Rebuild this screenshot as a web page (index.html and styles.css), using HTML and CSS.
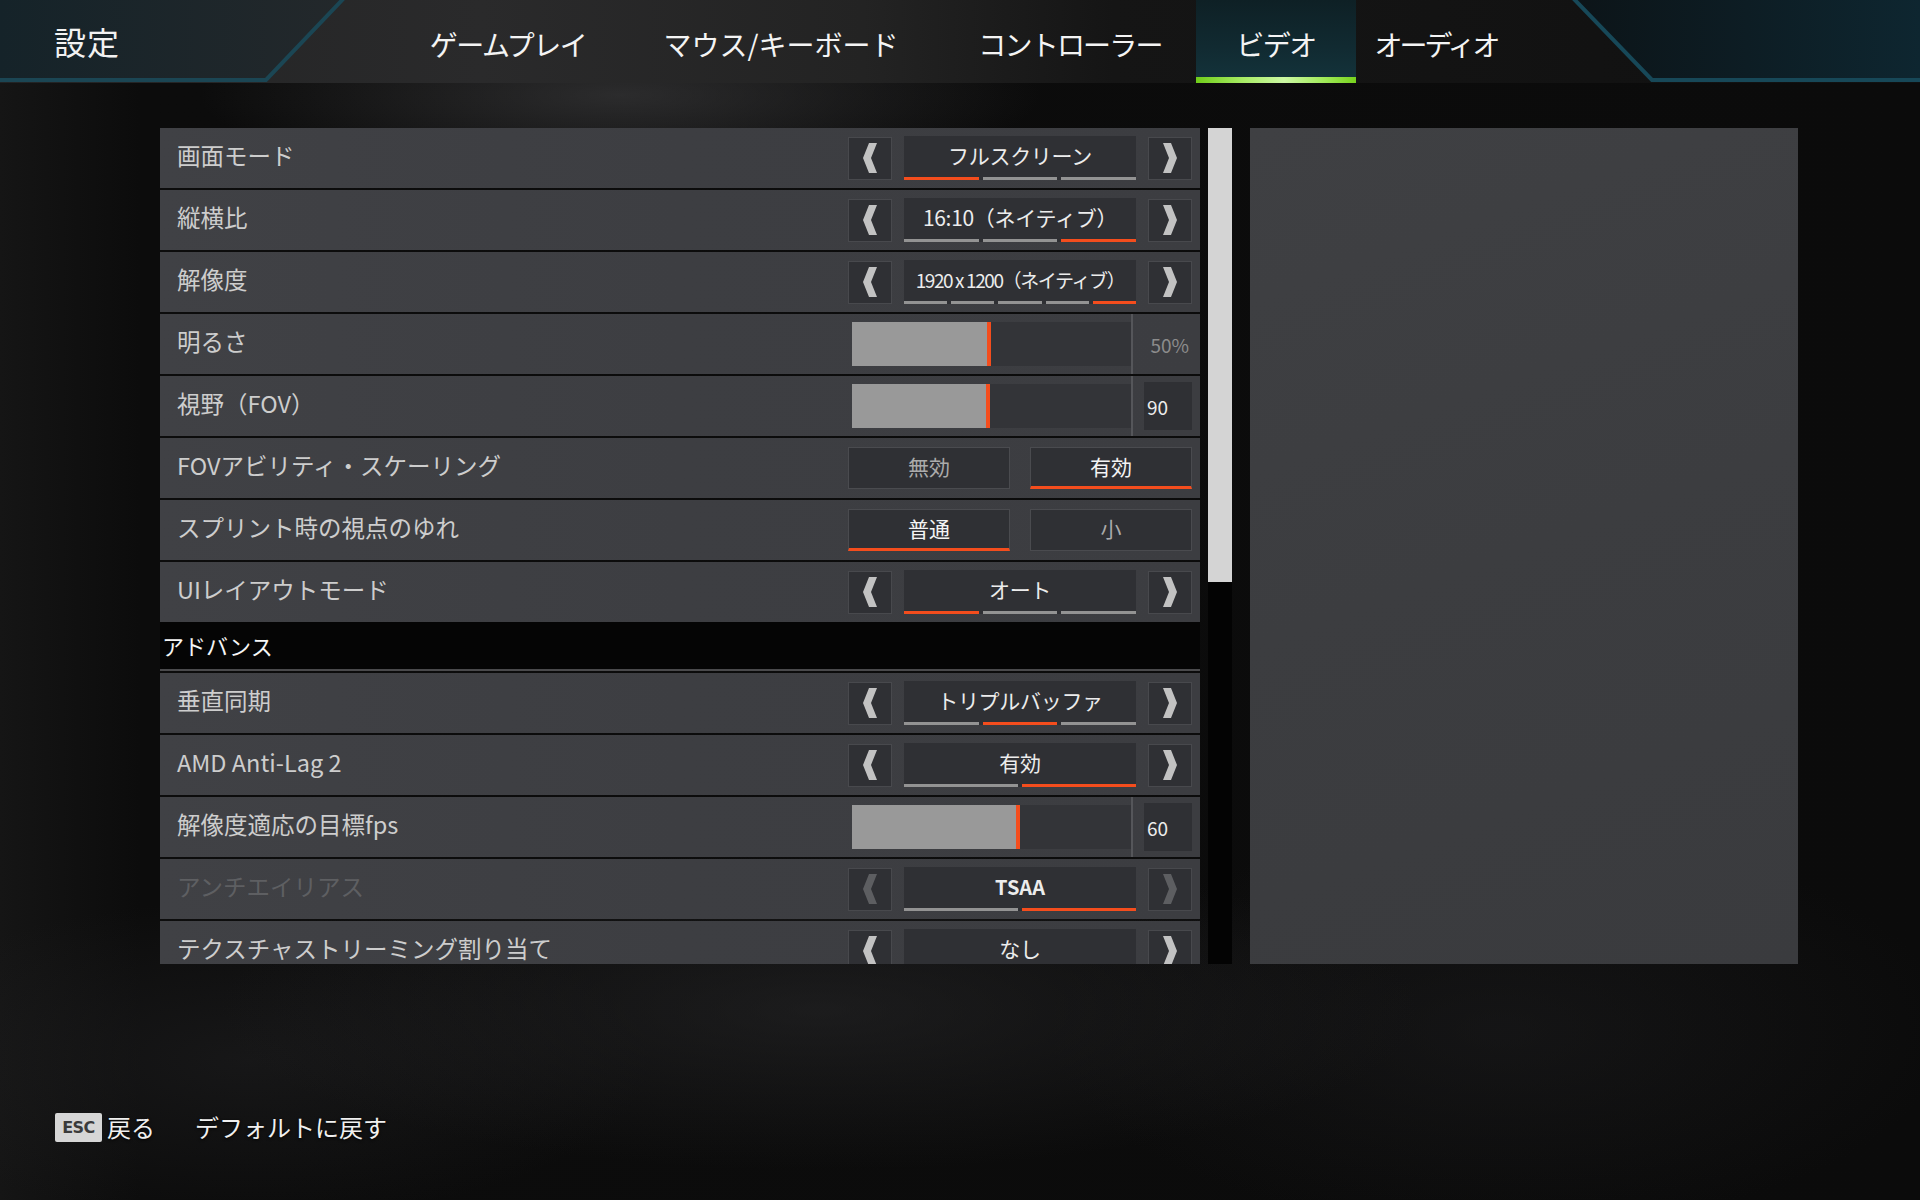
FILE: index.html
```html
<!DOCTYPE html>
<html lang="ja">
<head>
<meta charset="utf-8">
<title>設定</title>
<link rel="stylesheet" href="styles.css">
</head>
<body>
<header class="topbar">
  <svg class="topbar-deco" width="1920" height="83" viewBox="0 0 1920 83" aria-hidden="true">
    <defs>
      <linearGradient id="lp" x1="0" y1="0" x2="1" y2="0">
        <stop offset="0" stop-color="#152329"/>
        <stop offset="1" stop-color="#23282b"/>
      </linearGradient>
      <linearGradient id="rp" x1="0" y1="0" x2="1" y2="0">
        <stop offset="0" stop-color="#0c1418"/>
        <stop offset="1" stop-color="#0e2630"/>
      </linearGradient>
    </defs>
    <polygon points="0,0 343,0 266,81 0,81" fill="url(#lp)"/>
    <polyline points="345,-3 266,80 0,80" fill="none" stroke="#1b4654" stroke-width="4"/>
    <polygon points="1574,0 1653,81 1920,81 1920,0" fill="url(#rp)"/>
    <polyline points="1572,-3 1652,80 1920,80" fill="none" stroke="#174858" stroke-width="4"/>
  </svg>
  <h1 class="title">設定</h1>
  <nav class="tabs">
    <span class="tab t1">ゲームプレイ</span>
    <span class="tab t2">マウス/キーボード</span>
    <span class="tab t3">コントローラー</span>
    <span class="tab t4 active">ビデオ</span>
    <span class="tab t5">オーディオ</span>
  </nav>
</header>

<main class="content">
  <div class="list">
    <div class="row">
      <span class="label">画面モード</span>
      <div class="picker">
        <span class="arrow"><svg width="14" height="30" viewBox="0 0 14 30"><polygon points="14,0 8,15 14,30 6,30 0,15 6,0"/></svg></span>
        <div class="value"><span class="vtext">フルスクリーン</span><div class="segs"><i class="on"></i><i></i><i></i></div></div>
        <span class="arrow"><svg width="14" height="30" viewBox="0 0 14 30"><polygon points="0,0 8,0 14,15 8,30 0,30 6,15"/></svg></span>
      </div>
    </div>
    <div class="row">
      <span class="label">縦横比</span>
      <div class="picker">
        <span class="arrow"><svg width="14" height="30" viewBox="0 0 14 30"><polygon points="14,0 8,15 14,30 6,30 0,15 6,0"/></svg></span>
        <div class="value"><span class="vtext">16:10（ネイティブ）</span><div class="segs"><i></i><i></i><i class="on"></i></div></div>
        <span class="arrow"><svg width="14" height="30" viewBox="0 0 14 30"><polygon points="0,0 8,0 14,15 8,30 0,30 6,15"/></svg></span>
      </div>
    </div>
    <div class="row">
      <span class="label">解像度</span>
      <div class="picker">
        <span class="arrow"><svg width="14" height="30" viewBox="0 0 14 30"><polygon points="14,0 8,15 14,30 6,30 0,15 6,0"/></svg></span>
        <div class="value"><span class="vtext tight">1920 x 1200（ネイティブ）</span><div class="segs"><i></i><i></i><i></i><i></i><i class="on"></i></div></div>
        <span class="arrow"><svg width="14" height="30" viewBox="0 0 14 30"><polygon points="0,0 8,0 14,15 8,30 0,30 6,15"/></svg></span>
      </div>
    </div>
    <div class="row">
      <span class="label">明るさ</span>
      <div class="slider">
        <div class="track"><div class="fill" style="width:139px"></div></div>
        <span class="divider"></span>
        <span class="sval plain">50%</span>
      </div>
    </div>
    <div class="row">
      <span class="label">視野（FOV）</span>
      <div class="slider">
        <div class="track"><div class="fill" style="width:138px"></div></div>
        <span class="divider"></span>
        <span class="sval boxed">90</span>
      </div>
    </div>
    <div class="row">
      <span class="label">FOVアビリティ・スケーリング</span>
      <div class="toggle">
        <span class="opt">無効</span>
        <span class="opt sel">有効</span>
      </div>
    </div>
    <div class="row">
      <span class="label">スプリント時の視点のゆれ</span>
      <div class="toggle">
        <span class="opt sel">普通</span>
        <span class="opt">小</span>
      </div>
    </div>
    <div class="row">
      <span class="label">UIレイアウトモード</span>
      <div class="picker">
        <span class="arrow"><svg width="14" height="30" viewBox="0 0 14 30"><polygon points="14,0 8,15 14,30 6,30 0,15 6,0"/></svg></span>
        <div class="value"><span class="vtext">オート</span><div class="segs"><i class="on"></i><i></i><i></i></div></div>
        <span class="arrow"><svg width="14" height="30" viewBox="0 0 14 30"><polygon points="0,0 8,0 14,15 8,30 0,30 6,15"/></svg></span>
      </div>
    </div>

    <div class="section">アドバンス</div>

    <div class="row">
      <span class="label">垂直同期</span>
      <div class="picker">
        <span class="arrow"><svg width="14" height="30" viewBox="0 0 14 30"><polygon points="14,0 8,15 14,30 6,30 0,15 6,0"/></svg></span>
        <div class="value"><span class="vtext">トリプルバッファ</span><div class="segs"><i></i><i class="on"></i><i></i></div></div>
        <span class="arrow"><svg width="14" height="30" viewBox="0 0 14 30"><polygon points="0,0 8,0 14,15 8,30 0,30 6,15"/></svg></span>
      </div>
    </div>
    <div class="row">
      <span class="label">AMD Anti-Lag 2</span>
      <div class="picker">
        <span class="arrow"><svg width="14" height="30" viewBox="0 0 14 30"><polygon points="14,0 8,15 14,30 6,30 0,15 6,0"/></svg></span>
        <div class="value"><span class="vtext">有効</span><div class="segs"><i></i><i class="on"></i></div></div>
        <span class="arrow"><svg width="14" height="30" viewBox="0 0 14 30"><polygon points="0,0 8,0 14,15 8,30 0,30 6,15"/></svg></span>
      </div>
    </div>
    <div class="row">
      <span class="label">解像度適応の目標fps</span>
      <div class="slider">
        <div class="track"><div class="fill" style="width:168px"></div></div>
        <span class="divider"></span>
        <span class="sval boxed">60</span>
      </div>
    </div>
    <div class="row disabled">
      <span class="label">アンチエイリアス</span>
      <div class="picker">
        <span class="arrow"><svg width="14" height="30" viewBox="0 0 14 30"><polygon points="14,0 8,15 14,30 6,30 0,15 6,0"/></svg></span>
        <div class="value"><span class="vtext latin">TSAA</span><div class="segs"><i></i><i class="on"></i></div></div>
        <span class="arrow"><svg width="14" height="30" viewBox="0 0 14 30"><polygon points="0,0 8,0 14,15 8,30 0,30 6,15"/></svg></span>
      </div>
    </div>
    <div class="row">
      <span class="label">テクスチャストリーミング割り当て</span>
      <div class="picker">
        <span class="arrow"><svg width="14" height="30" viewBox="0 0 14 30"><polygon points="14,0 8,15 14,30 6,30 0,15 6,0"/></svg></span>
        <div class="value"><span class="vtext">なし</span><div class="segs"><i class="on"></i><i></i><i></i><i></i><i></i></div></div>
        <span class="arrow"><svg width="14" height="30" viewBox="0 0 14 30"><polygon points="0,0 8,0 14,15 8,30 0,30 6,15"/></svg></span>
      </div>
    </div>
  </div>

  <div class="scrollbar"><div class="thumb"></div></div>

  <aside class="preview"></aside>
</main>

<footer class="footer">
  <span class="key">ESC</span>
  <span class="hint">戻る</span>
  <span class="hint reset">デフォルトに戻す</span>
</footer>
</body>
</html>
```

FILE: styles.css
```css
* { box-sizing: border-box; }

html, body {
  margin: 0;
  padding: 0;
}

body {
  width: 1920px;
  height: 1200px;
  overflow: hidden;
  font-family: "Noto Sans CJK JP", "Noto Sans", sans-serif;
  color: #e6e6e6;
  background:
    radial-gradient(ellipse 420px 90px at 620px 95px, rgba(70,70,72,0.55), rgba(0,0,0,0) 100%),
    radial-gradient(ellipse 600px 160px at 820px 1010px, rgba(44,44,46,0.5), rgba(0,0,0,0) 100%),
    radial-gradient(ellipse 400px 160px at 250px 1060px, rgba(36,36,38,0.45), rgba(0,0,0,0) 100%),
    radial-gradient(ellipse 450px 200px at 1500px 1030px, rgba(32,32,34,0.45), rgba(0,0,0,0) 100%),
    linear-gradient(90deg, #151515 0px, #0c0c0c 140px, #0b0b0b 100%);
}

/* ---------- header ---------- */
.topbar {
  position: relative;
  height: 83px;
  display: flex;
  align-items: stretch;
  background: linear-gradient(90deg, #222324 0%, #2a2a2b 25%, #232323 45%, #151515 58%, #101010 100%);
}

.topbar-deco {
  position: absolute;
  left: 0;
  top: 0;
}

.title {
  position: relative;
  margin: 0;
  padding-left: 54px;
  width: 398px;
  font-size: 32px;
  font-weight: 400;
  line-height: 83px;
  color: #f2f2f2;
  letter-spacing: 1px;
}

.tabs {
  position: relative;
  display: flex;
  align-items: stretch;
}

.tab {
  display: flex;
  align-items: center;
  justify-content: center;
  padding-top: 4px;
  font-size: 28px;
  letter-spacing: -1.5px;
  color: #f4f4f4;
  white-space: nowrap;
}

.t1 { width: 220px; }
.t2 { width: 326px; letter-spacing: 0; }
.t3 { width: 252px; letter-spacing: -1.8px; }
.t4 { width: 160px; }
.t5 { width: 160px; letter-spacing: -3px; }

.tab.active {
  background: linear-gradient(180deg, #0e2025 0%, #112a31 60%, #13323a 100%);
  border-bottom: 6px solid #86dc26;
  border-image: linear-gradient(90deg, #6fcc18 0%, #a8ec66 30%, #ccf8a4 55%, #a0ea58 80%, #76d21c 100%) 1;
  padding-top: 10px;
}

/* ---------- content ---------- */
.content {
  display: flex;
  align-items: flex-start;
  padding: 45px 0 0 160px;
  height: 881px;
}

.list {
  width: 1040px;
  height: 836px;
  overflow: hidden;
}

.row {
  height: 60px;
  margin-bottom: 2px;
  display: flex;
  align-items: center;
  padding-left: 17px;
  background: linear-gradient(90deg, #404145 0%, #3d3e42 50%, #3c3d41 100%);
}

.label {
  flex: 1;
  padding-bottom: 6px;
  font-size: 23.5px;
  color: #cdcdcd;
  white-space: nowrap;
}

.row.disabled .label { color: #5e5f62; }
.row.disabled .arrow svg { fill: #5d5e61; }

/* picker */
.picker {
  display: flex;
  align-items: center;
  gap: 12px;
  margin-right: 8px;
}

.arrow {
  width: 44px;
  height: 43px;
  display: flex;
  align-items: center;
  justify-content: center;
  background: #2f3034;
  border: 1px solid #48494d;
}

.arrow svg { fill: #c2c2c2; }

.value {
  width: 232px;
  height: 44px;
  display: flex;
  flex-direction: column;
  background: #2f3034;
}

.vtext {
  flex: 1;
  display: flex;
  align-items: center;
  justify-content: center;
  padding-bottom: 3px;
  font-size: 21px;
  color: #ececec;
  white-space: nowrap;
  letter-spacing: -0.3px;
}

.vtext.tight {
  font-size: 19px;
  letter-spacing: -1.4px;
}

.vtext.latin { font-weight: 700; font-size: 20px; letter-spacing: 0; }

.segs {
  display: flex;
  gap: 4px;
  height: 3px;
}

.segs i {
  flex: 1;
  background: #939393;
}

.segs i.on { background: #f44d1d; }

/* slider */
.slider {
  display: flex;
  align-self: stretch;
  align-items: center;
}

.track {
  width: 279px;
  height: 44px;
  background: #333438;
}

.fill {
  height: 100%;
  background: #999999;
  border-right: 4px solid #f44d1d;
}

.divider {
  align-self: stretch;
  width: 2px;
  background: #55565a;
}

.sval {
  width: 67px;
  font-size: 19px;
}

.sval.plain {
  text-align: right;
  padding-right: 11px;
  color: #8c8c8c;
}

.sval.boxed {
  width: 48px;
  height: 48px;
  margin: 0 8px 0 11px;
  display: flex;
  align-items: center;
  padding-left: 3px;
  background: #2f3034;
  color: #ececec;
}

/* toggle */
.toggle {
  display: flex;
  gap: 20px;
  margin-right: 8px;
}

.opt {
  width: 162px;
  height: 42px;
  display: flex;
  align-items: center;
  justify-content: center;
  padding-bottom: 4px;
  background: #2f3034;
  border: 1px solid #4a4b4f;
  font-size: 21px;
  color: #ababab;
}

.opt.sel {
  color: #f4f4f4;
  border-bottom: 3px solid #f44d1d;
  padding-bottom: 2px;
}

/* section header */
.section {
  height: 49px;
  margin-bottom: 2px;
  margin-top: -2px;
  padding: 0 0 2px 2px;
  display: flex;
  align-items: center;
  background: #050505;
  border-bottom: 2px solid #4a4a4c;
  font-size: 22px;
  color: #f6f6f6;
}

/* scrollbar */
.scrollbar {
  width: 24px;
  height: 836px;
  margin-left: 8px;
  background: #030303;
}

.thumb {
  height: 454px;
  background: #d4d4d4;
}

/* preview panel */
.preview {
  width: 548px;
  height: 836px;
  margin-left: 18px;
  background: linear-gradient(160deg, #3f4043 0%, #3c3d40 50%, #3a3b3e 100%);
}

/* footer */
.footer {
  display: flex;
  align-items: center;
  height: 29px;
  margin-top: 149px;
  padding-left: 55px;
}

.key {
  width: 47px;
  height: 29px;
  display: flex;
  align-items: center;
  justify-content: center;
  background: #d6d6d6;
  border-radius: 2px;
  color: #3b3b3b;
  font-family: "DejaVu Sans", sans-serif;
  font-weight: 700;
  font-size: 16px;
  letter-spacing: -0.5px;
}

.hint {
  margin-left: 5px;
  padding-bottom: 2px;
  font-size: 24px;
  color: #f0f0f0;
  text-shadow: 0 1px 3px rgba(0,0,0,0.9);
}

.hint.reset { margin-left: 40px; }
```
